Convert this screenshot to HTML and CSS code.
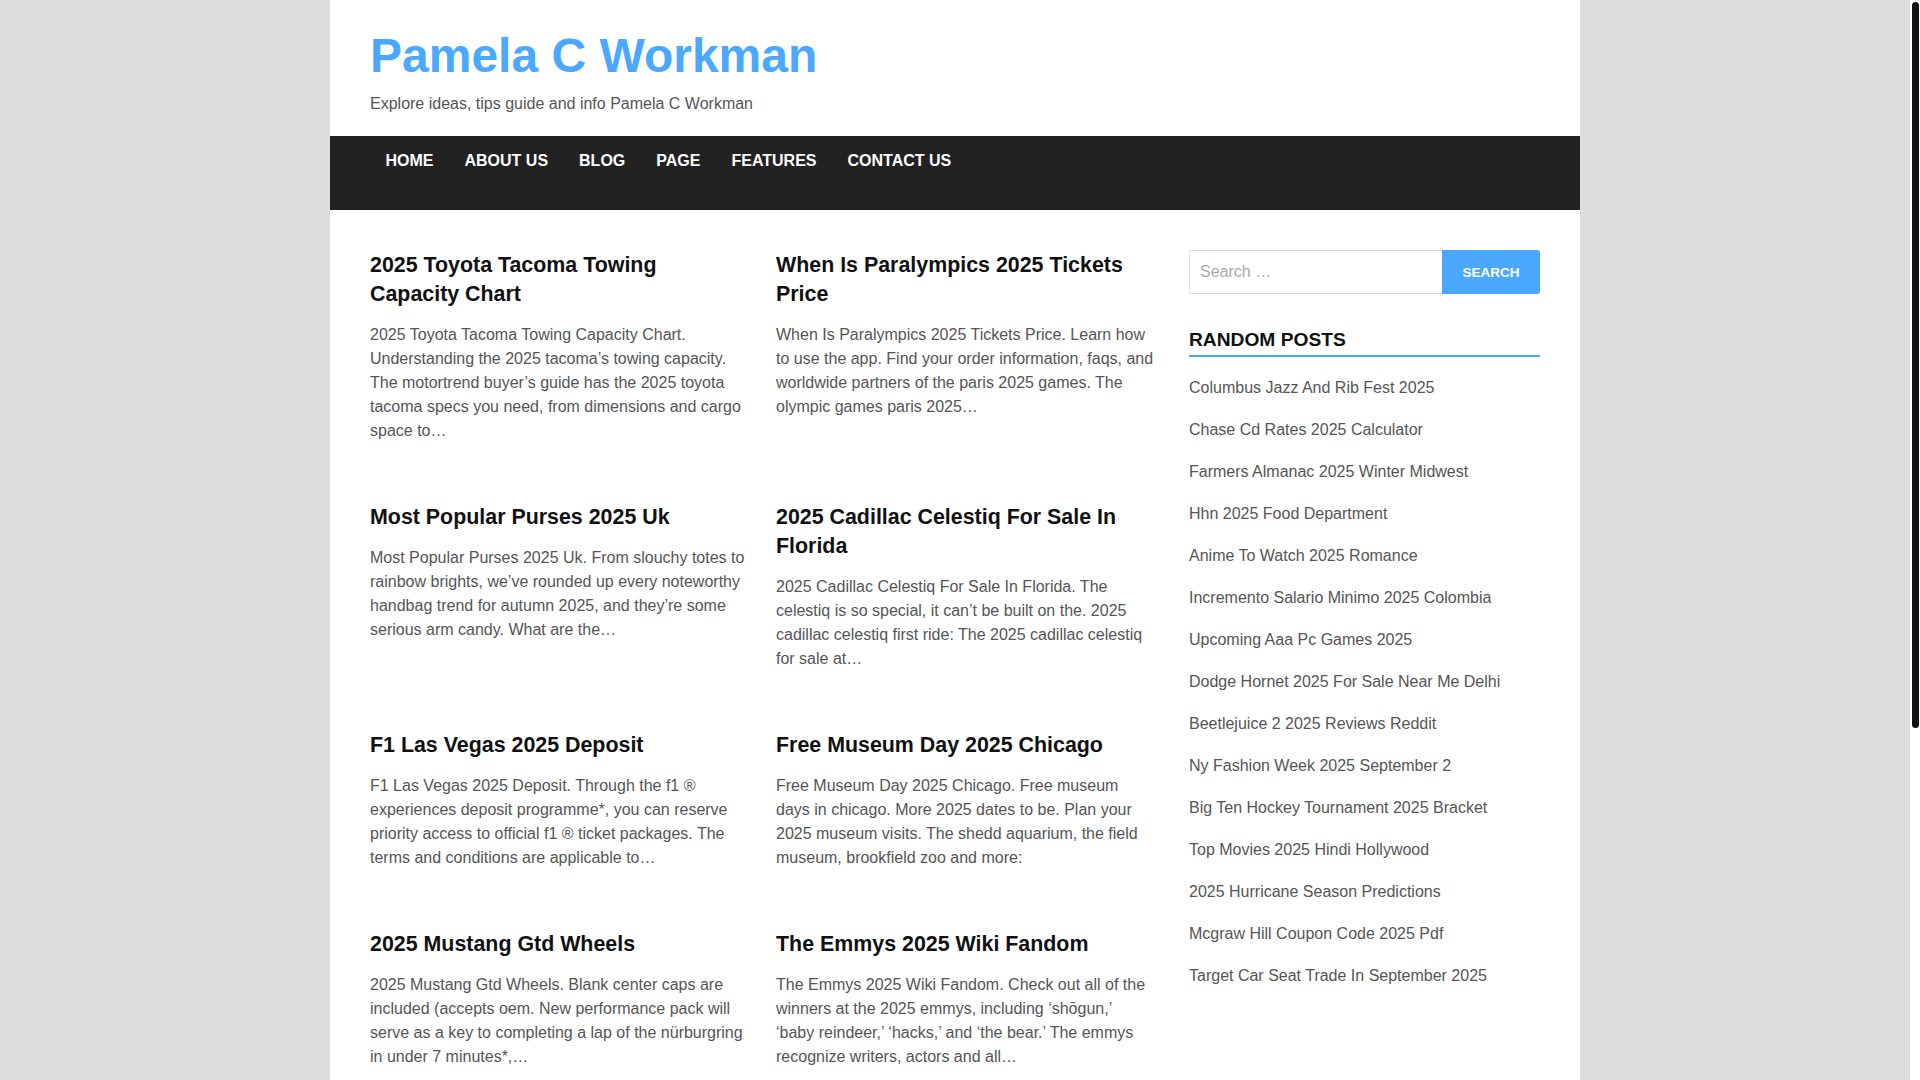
FILE: index.html
```html
<!DOCTYPE html>
<html lang="en">
<head>
<meta charset="utf-8">
<title>Pamela C Workman</title>
<link rel="stylesheet" href="styles.css">
</head>
<body>
<div class="site">
  <header class="site-header">
    <h1 class="site-title">Pamela C Workman</h1>
    <p class="site-description">Explore ideas, tips guide and info Pamela C Workman</p>
  </header>
  <nav class="main-nav">
    <ul class="menu">
      <li><a href="#">Home</a></li>
      <li><a href="#">About Us</a></li>
      <li><a href="#">Blog</a></li>
      <li><a href="#">Page</a></li>
      <li><a href="#">Features</a></li>
      <li><a href="#">Contact Us</a></li>
    </ul>
  </nav>
  <div class="content">
    <main class="posts">
      <article class="post">
        <h2 class="post-title">2025 Toyota Tacoma Towing Capacity Chart</h2>
        <p class="excerpt">2025 Toyota Tacoma Towing Capacity Chart. Understanding the 2025 tacoma’s towing capacity. The motortrend buyer’s guide has the 2025 toyota tacoma specs you need, from dimensions and cargo space to…</p>
      </article>
      <article class="post">
        <h2 class="post-title">When Is Paralympics 2025 Tickets Price</h2>
        <p class="excerpt">When Is Paralympics 2025 Tickets Price. Learn how to use the app. Find your order information, faqs, and worldwide partners of the paris 2025 games. The olympic games paris 2025…</p>
      </article>
      <article class="post">
        <h2 class="post-title">Most Popular Purses 2025 Uk</h2>
        <p class="excerpt">Most Popular Purses 2025 Uk. From slouchy totes to rainbow brights, we’ve rounded up every noteworthy handbag trend for autumn 2025, and they’re some serious arm candy. What are the…</p>
      </article>
      <article class="post">
        <h2 class="post-title">2025 Cadillac Celestiq For Sale In Florida</h2>
        <p class="excerpt">2025 Cadillac Celestiq For Sale In Florida. The celestiq is so special, it can’t be built on the. 2025 cadillac celestiq first ride: The 2025 cadillac celestiq for sale at…</p>
      </article>
      <article class="post">
        <h2 class="post-title">F1 Las Vegas 2025 Deposit</h2>
        <p class="excerpt">F1 Las Vegas 2025 Deposit. Through the f1 ® experiences deposit programme*, you can reserve priority access to official f1 ® ticket packages. The terms and conditions are applicable to…</p>
      </article>
      <article class="post">
        <h2 class="post-title">Free Museum Day 2025 Chicago</h2>
        <p class="excerpt">Free Museum Day 2025 Chicago. Free museum days in chicago. More 2025 dates to be. Plan your 2025 museum visits. The shedd aquarium, the field museum, brookfield zoo and more:</p>
      </article>
      <article class="post">
        <h2 class="post-title">2025 Mustang Gtd Wheels</h2>
        <p class="excerpt">2025 Mustang Gtd Wheels. Blank center caps are included (accepts oem. New performance pack will serve as a key to completing a lap of the nürburgring in under 7 minutes*,…</p>
      </article>
      <article class="post">
        <h2 class="post-title">The Emmys 2025 Wiki Fandom</h2>
        <p class="excerpt">The Emmys 2025 Wiki Fandom. Check out all of the winners at the 2025 emmys, including ‘shōgun,’ ‘baby&nbsp;reindeer,’ ‘hacks,’ and ‘the bear.’ The emmys recognize writers, actors and all…</p>
      </article>
    </main>
    <aside class="sidebar">
      <form class="search-form">
        <input class="search-field" type="search" placeholder="Search …">
        <button class="search-submit" type="button">Search</button>
      </form>
      <section class="widget">
        <h3 class="widget-title">Random Posts</h3>
        <ul class="widget-list">
          <li><a href="#">Columbus Jazz And Rib Fest 2025</a></li>
          <li><a href="#">Chase Cd Rates 2025 Calculator</a></li>
          <li><a href="#">Farmers Almanac 2025 Winter Midwest</a></li>
          <li><a href="#">Hhn 2025 Food Department</a></li>
          <li><a href="#">Anime To Watch 2025 Romance</a></li>
          <li><a href="#">Incremento Salario Minimo 2025 Colombia</a></li>
          <li><a href="#">Upcoming Aaa Pc Games 2025</a></li>
          <li><a href="#">Dodge Hornet 2025 For Sale Near Me Delhi</a></li>
          <li><a href="#">Beetlejuice 2 2025 Reviews Reddit</a></li>
          <li><a href="#">Ny Fashion Week 2025 September 2</a></li>
          <li><a href="#">Big Ten Hockey Tournament 2025 Bracket</a></li>
          <li><a href="#">Top Movies 2025 Hindi Hollywood</a></li>
          <li><a href="#">2025 Hurricane Season Predictions</a></li>
          <li><a href="#">Mcgraw Hill Coupon Code 2025 Pdf</a></li>
          <li><a href="#">Target Car Seat Trade In September 2025</a></li>
        </ul>
      </section>
    </aside>
  </div>
</div>
<div class="scroll-track" aria-hidden="true"><div class="scroll-thumb"></div></div>
</body>
</html>
```

FILE: styles.css
```css
html {
  background: #dddddd;
  scrollbar-width: none;
}
::-webkit-scrollbar {
  display: none;
  width: 0;
}
body {
  margin: 0;
  padding-right: 10px;
  background: #dddddd;
  font-family: "Liberation Sans", Arial, sans-serif;
  color: #555555;
}
a {
  text-decoration: none;
  color: inherit;
}
.site {
  width: 1250px;
  margin: 0 auto;
  background: #ffffff;
  min-height: 1610px;
}
.site-header {
  padding: 27px 40px 20px;
}
.site-title {
  margin: 0;
  font-size: 48px;
  line-height: 58px;
  font-weight: 700;
  color: #4aa8ff;
}
.site-description {
  margin: 7px 0 0;
  font-size: 16px;
  line-height: 24px;
  color: #555555;
}
.main-nav {
  background: #222222;
  height: 74px;
  padding: 0 40px;
  box-sizing: border-box;
}
.menu {
  list-style: none;
  margin: 0;
  padding: 0;
  display: flex;
}
.menu a {
  display: block;
  padding: 13px 15.5px;
  font-size: 16px;
  line-height: 24px;
  font-weight: 700;
  text-transform: uppercase;
  color: #ffffff;
}
.content {
  display: flex;
  padding: 41px 40px 0;
}
.posts {
  width: 785px;
  display: grid;
  grid-template-columns: 379px 379px;
  column-gap: 27px;
  row-gap: 60px;
  align-content: start;
}
.post-title {
  margin: 0 0 14px;
  font-size: 21.4px;
  line-height: 29px;
  font-weight: 700;
  color: #111111;
}
.excerpt {
  margin: 0;
  font-size: 16px;
  line-height: 24px;
  color: #555555;
}
.sidebar {
  width: 385px;
  padding-left: 34px;
  box-sizing: border-box;
  margin-top: -1px;
}
.search-form {
  display: flex;
}
.search-field {
  width: 253px;
  height: 44px;
  box-sizing: border-box;
  border: 1px solid #dddddd;
  border-right: none;
  border-radius: 3px 0 0 3px;
  padding: 0 10px;
  font-family: inherit;
  font-size: 16px;
  color: #555555;
  outline: none;
}
.search-field::placeholder {
  color: #aaaaaa;
}
.search-submit {
  width: 98px;
  height: 44px;
  border: none;
  border-radius: 0 3px 3px 0;
  background: #4aa8ff;
  color: #ffffff;
  font-family: inherit;
  font-size: 13.5px;
  font-weight: 700;
  text-transform: uppercase;
  padding: 0;
}
.widget {
  margin-top: 33px;
}
.widget-title {
  margin: 0;
  font-size: 19.2px;
  line-height: 25px;
  font-weight: 700;
  text-transform: uppercase;
  color: #111111;
  padding-bottom: 3px;
  border-bottom: 2px solid #4aa8ff;
}
.widget-list {
  list-style: none;
  margin: 10px 0 0;
  padding: 0;
}
.widget-list li {
  padding: 9px 0;
  font-size: 16px;
  line-height: 24px;
  color: #555555;
}
.scroll-track {
  position: fixed;
  top: 0;
  right: 0;
  width: 10px;
  height: 100vh;
  background: #ffffff;
}
.scroll-thumb {
  margin: 2px 1px 0 2px;
  height: 726px;
  background: #111111;
  border-radius: 4px;
}
```
